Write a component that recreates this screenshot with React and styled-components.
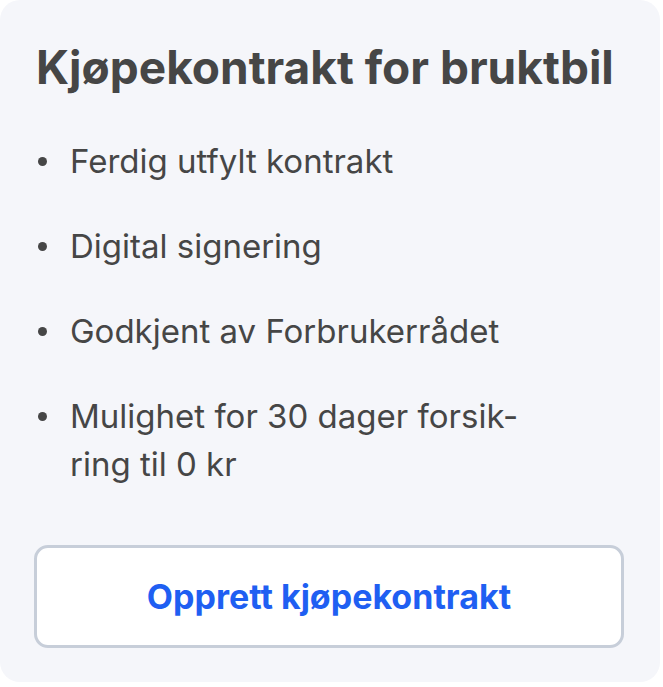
import React from "react";
import styled, { createGlobalStyle } from "styled-components";

const GlobalStyle = createGlobalStyle`
    body {
        margin: 0;
        background: #ffffff;
        font-family: Inter, "Liberation Sans", sans-serif;
    }
`;

const Card = styled.section`
    box-sizing: border-box;
    width: 660px;
    height: 682px;
    background: #f5f6fa;
    border-radius: 20px;
    padding: 40px 36px 0 34px;
    display: flex;
    flex-direction: column;
`;

const Title = styled.h2`
    margin: 0 0 0 2px;
    font-size: 46px;
    line-height: 54px;
    font-weight: 700;
    color: #464646;
`;

const List = styled.ul`
    list-style: none;
    margin: 43px 0 0;
    padding: 0;
    display: flex;
    flex-direction: column;
    gap: 37px;
`;

const Item = styled.li`
    display: flex;
    align-items: flex-start;
    font-size: 33px;
    line-height: 48px;
    color: #464646;
`;

const Bullet = styled.span`
    flex: none;
    width: 9px;
    height: 9px;
    border-radius: 50%;
    background: #464646;
    margin: 20px 23px 0 4px;
`;

const Button = styled.button`
    margin-top: 57px;
    box-sizing: border-box;
    width: 590px;
    height: 103px;
    background: #ffffff;
    border: 3px solid #c7ced9;
    border-radius: 14px;
    font-family: inherit;
    font-size: 34px;
    font-weight: 700;
    color: #1f5ff2;
    cursor: pointer;
`;

const items = [
    ["Ferdig utfylt kontrakt"],
    ["Digital signering"],
    ["Godkjent av Forbrukerrådet"],
    ["Mulighet for 30 dager forsik-", "ring til 0 kr"],
];

export default function App() {
    return (
        <>
            <GlobalStyle />
            <Card>
                <Title>Kjøpekontrakt for bruktbil</Title>
                <List>
                    {items.map((lines) => (
                        <Item key={lines[0]}>
                            <Bullet />
                            <span>
                                {lines.map((l, i) => (
                                    <React.Fragment key={l}>
                                        {i > 0 && <br />}
                                        {l}
                                    </React.Fragment>
                                ))}
                            </span>
                        </Item>
                    ))}
                </List>
                <Button>Opprett kjøpekontrakt</Button>
            </Card>
        </>
    );
}
